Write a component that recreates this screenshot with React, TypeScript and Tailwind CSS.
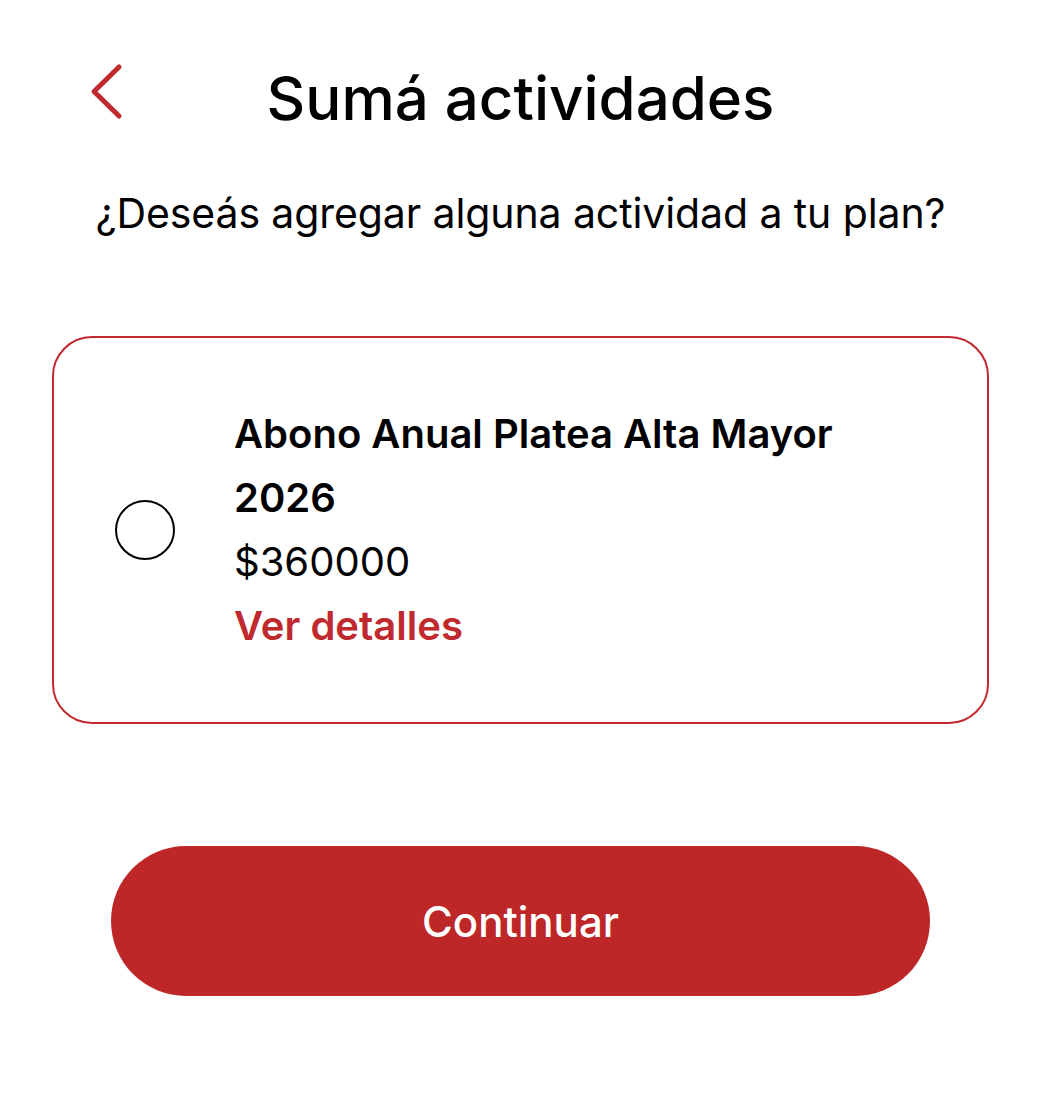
function BackChevron() {
  return (
    <svg width="34" height="57" viewBox="0 0 34 57" fill="none" stroke="currentColor" strokeWidth="5" strokeLinecap="round" strokeLinejoin="round">
      <path d="M29 4 4 28.5 29 53" />
    </svg>
  )
}

function ActivityCard() {
  return (
    <div className="flex items-center rounded-[40px] border-2 border-[#c0292e] py-[64px] pl-[61px] pr-10">
      <div className="h-[60px] w-[60px] shrink-0 rounded-full border-[2.5px] border-black" />
      <div className="ml-[59px] flex w-[640px] flex-col text-[40px] leading-[64px]">
        <span className="font-semibold text-black">Abono Anual Platea Alta Mayor 2026</span>
        <span className="text-black">$360000</span>
        <span className="font-semibold text-[#c0292e]">Ver detalles</span>
      </div>
    </div>
  )
}

export default function App() {
  return (
    <main className="flex min-h-[1105px] w-[1041px] flex-col bg-white font-['Inter',sans-serif] text-black">
      <header className="relative flex justify-center pt-[68px]">
        <button className="absolute left-[90px] top-[63px] text-[#c0292e]">
          <BackChevron />
        </button>
        <h1 className="text-[60px] font-medium leading-none">Sumá actividades</h1>
      </header>

      <p className="mt-[65px] text-center text-[41px] leading-none tracking-[-0.1px]">
        ¿Deseás agregar alguna actividad a tu plan?
      </p>

      <section className="mt-[102px] px-[52px]">
        <ActivityCard />
      </section>

      <div className="mt-[122px] flex justify-center">
        <button className="h-[150px] w-[819px] rounded-full bg-[#be2727] text-[42px] font-medium text-white">
          Continuar
        </button>
      </div>
    </main>
  )
}
